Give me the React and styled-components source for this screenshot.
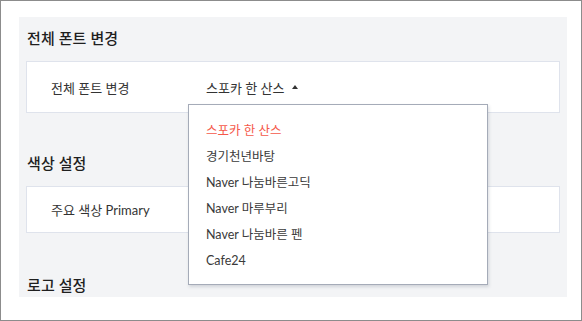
import React from "react";
import styled, { createGlobalStyle } from "styled-components";

const GlobalStyle = createGlobalStyle`
  html, body {
    margin: 0;
    padding: 0;
    background: #ffffff;
  }
  body {
    font-family: Lato, "Noto Sans CJK KR", "Noto Sans", sans-serif;
    color: #222222;
  }
  * {
    box-sizing: border-box;
  }
`;

const fonts = [
  "스포카 한 산스",
  "경기천년바탕",
  "Naver 나눔바른고딕",
  "Naver 마루부리",
  "Naver 나눔바른 펜",
  "Cafe24",
];

const Frame = styled.div`
  width: 582px;
  height: 321px;
  border: 1px solid #8c8c8c;
  padding: 16px 14px 0 18px;
  overflow: hidden;
`;

const Panel = styled.div`
  height: 280px;
  background: #f3f4f6;
  padding: 11px 7px 0 7px;
  overflow: hidden;
`;

const Section = styled.section`
  margin-top: ${(p) => p.$gap || 0}px;
`;

const Heading = styled.h2`
  margin: 0 0 13px 1px;
  font-size: 15px;
  line-height: 20px;
  font-weight: 500;
  color: #1f1f1f;
  letter-spacing: 0.1px;
`;

const Card = styled.div`
  position: relative;
  height: ${(p) => p.$height}px;
  background: #ffffff;
  border: 1px solid #dfe3ec;
  display: flex;
  align-items: center;
  padding: 0 24px;
`;

const Label = styled.span`
  width: 155px;
  flex-shrink: 0;
  font-size: 13px;
  color: #333333;
`;

const Trigger = styled.button`
  display: flex;
  align-items: center;
  gap: 8px;
  border: 0;
  background: none;
  padding: 0;
  font: inherit;
  font-size: 13px;
  color: #333333;
  cursor: pointer;
`;

const Caret = styled.span`
  width: 0;
  height: 0;
  border-left: 3.5px solid transparent;
  border-right: 3.5px solid transparent;
  border-bottom: 4px solid #333333;
`;

const Menu = styled.ul`
  position: absolute;
  left: 161px;
  top: 42px;
  z-index: 5;
  width: 300px;
  height: 181px;
  margin: 0;
  padding: 13px 0 10px 17px;
  list-style: none;
  background: #ffffff;
  border: 1px solid #a5abb8;
  box-shadow: 1px 2px 3px rgba(60, 70, 90, 0.18);
`;

const Item = styled.li`
  height: 26px;
  line-height: 26px;
  font-size: 12.5px;
  color: ${(p) => (p.$active ? "#f5584a" : "#3a3a3a")};
`;

export default function App() {
  return (
    <>
      <GlobalStyle />
      <Frame>
        <Panel>
          <Section>
            <Heading>전체 폰트 변경</Heading>
            <Card $height={52}>
              <Label>전체 폰트 변경</Label>
              <Trigger>
                스포카 한 산스
                <Caret />
              </Trigger>
              <Menu>
                {fonts.map((name, i) => (
                  <Item key={name} $active={i === 0}>
                    {name}
                  </Item>
                ))}
              </Menu>
            </Card>
          </Section>
          <Section $gap={40}>
            <Heading>색상 설정</Heading>
            <Card $height={47}>
              <Label>주요 색상 Primary</Label>
            </Card>
          </Section>
          <Section $gap={42}>
            <Heading>로고 설정</Heading>
          </Section>
        </Panel>
      </Frame>
    </>
  );
}
